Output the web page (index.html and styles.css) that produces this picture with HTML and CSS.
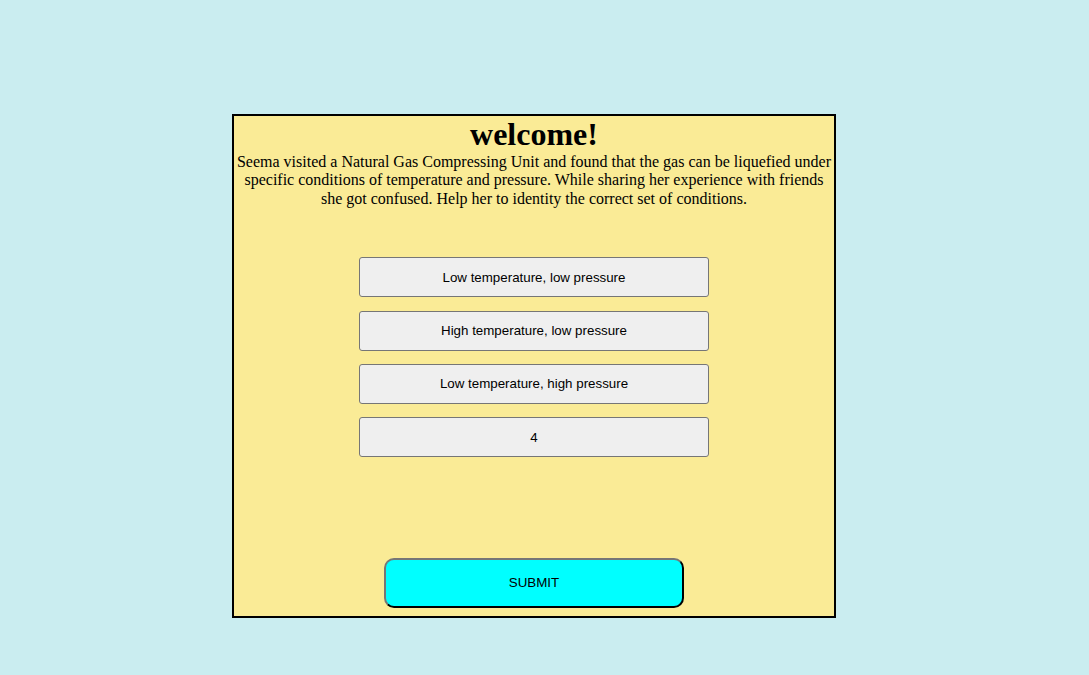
FILE: index.html
```html
<!DOCTYPE html>
<html>
<head>
<meta charset="utf-8">
<link rel="stylesheet" href="styles.css">
</head>
<body>
<div class="page">
  <div class="quiz">
    <h1 class="title">welcome!</h1>
    <p class="question">Seema visited a Natural Gas Compressing Unit and found that the gas can be liquefied under specific conditions of temperature and pressure. While sharing her experience with friends she got confused. Help her to identity the correct set of conditions.</p>
    <div class="options">
      <button class="option">Low temperature, low pressure</button>
      <button class="option">High temperature, low pressure</button>
      <button class="option">Low temperature, high pressure</button>
      <button class="option">4</button>
    </div>
    <div class="actions">
      <button class="submit">SUBMIT</button>
    </div>
  </div>
</div>
</body>
</html>
```

FILE: styles.css
```css
html, body {
  margin: 0;
  padding: 0;
}
body {
  background: #caedf0;
  font-family: "Liberation Serif", "Times New Roman", serif;
  width: 1089px;
  height: 675px;
}
.page {
  display: flex;
  justify-content: flex-start;
  padding-top: 114px;
  padding-left: 232px;
}
.quiz {
  width: 600px;
  height: 500px;
  border: 2px solid #000;
  background: #faeb96;
  display: flex;
  flex-direction: column;
  align-items: center;
  box-sizing: content-box;
}
.title {
  margin: 0;
  font-size: 32px;
  font-weight: bold;
  line-height: 37px;
  color: #000;
}
.question {
  margin: 0;
  padding: 0;
  font-size: 16px;
  line-height: 18.4px;
  text-align: center;
  color: #000;
}
.options {
  margin-top: 49px;
  display: flex;
  flex-direction: column;
  gap: 13.3px;
}
.option {
  width: 350px;
  height: 40px;
  background: #efefef;
  border: 1px solid #767676;
  border-radius: 3px;
  font-family: "Liberation Sans", Arial, sans-serif;
  font-size: 13.33px;
  color: #000;
  padding: 0;
}
.actions {
  margin-top: auto;
  margin-bottom: 8px;
}
.submit {
  width: 300px;
  height: 50px;
  background: #00ffff;
  border: 2px outset #767676;
  border-right-color: #333;
  border-bottom-color: #333;
  border-radius: 10px;
  font-family: "Liberation Sans", Arial, sans-serif;
  font-size: 13.33px;
  color: #000;
  padding: 0 0 1px;
}
```
